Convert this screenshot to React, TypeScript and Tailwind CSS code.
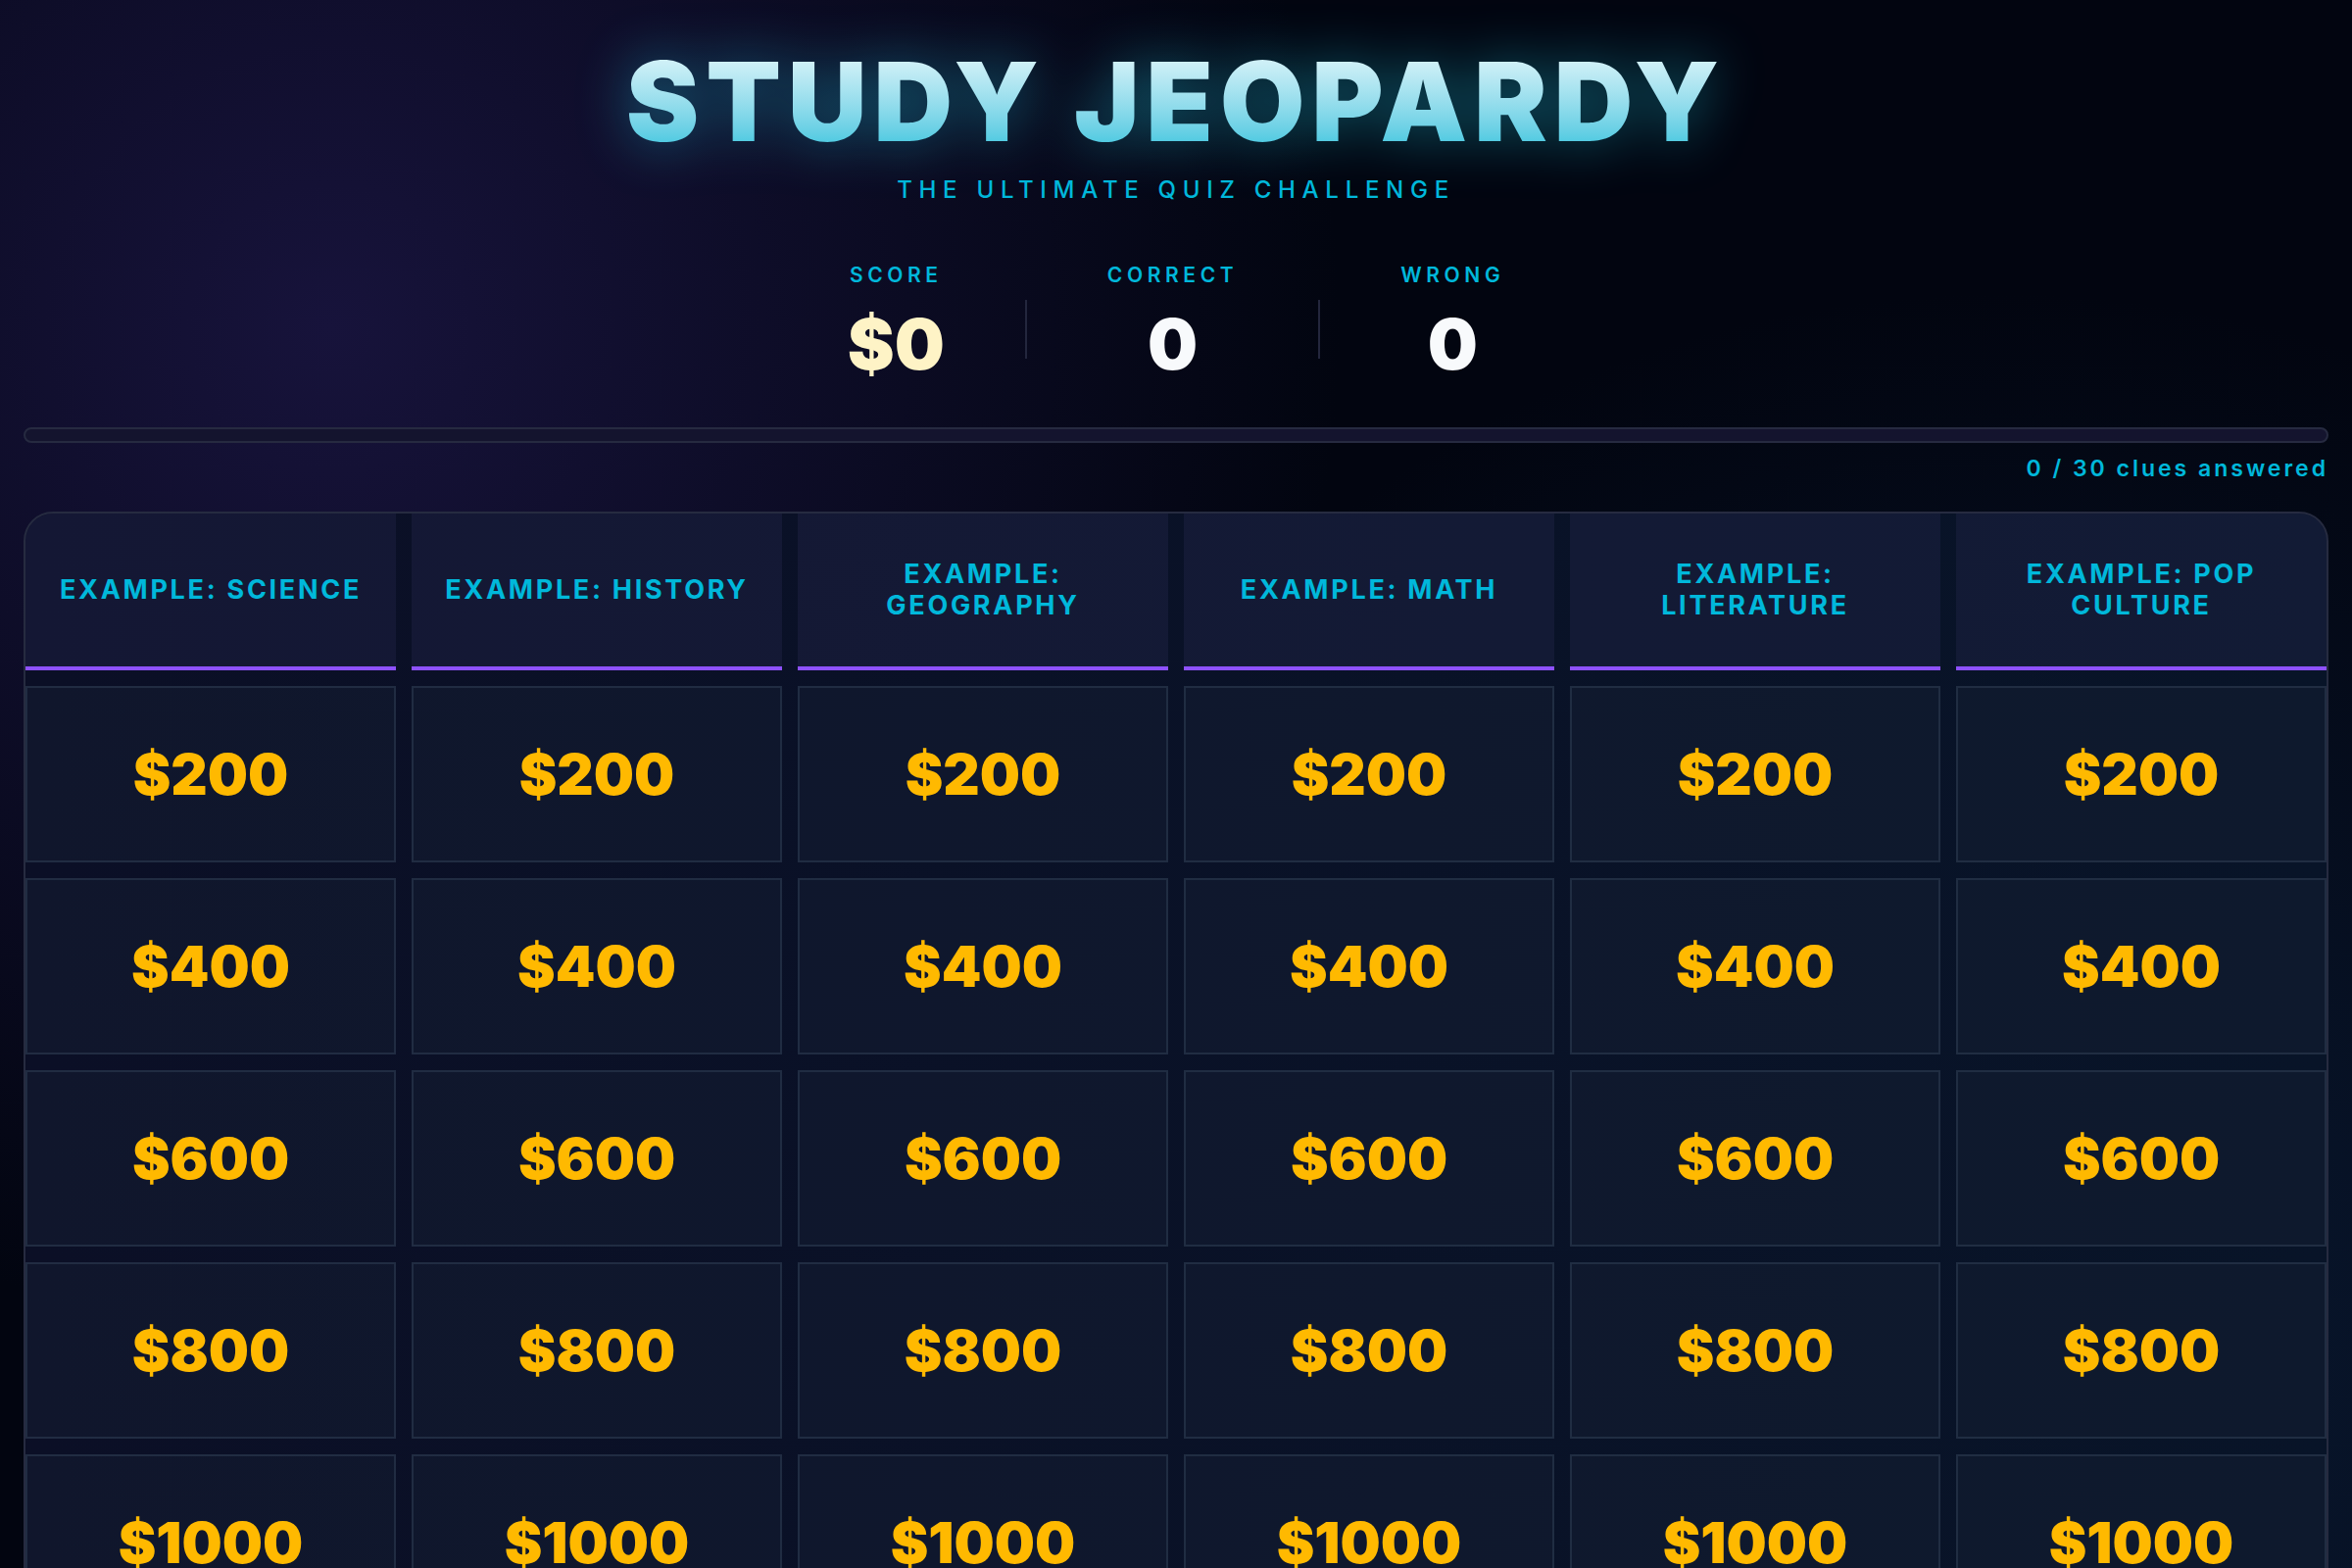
import React from 'react';

const categories = [
  'Example: Science',
  'Example: History',
  'Example: Geography',
  'Example: Math',
  'Example: Literature',
  'Example: Pop Culture',
];

const values = [200, 400, 600, 800, 1000];

const Stat: React.FC<{ label: string; value: string; tone: string }> = ({ label, value, tone }) => (
  <div className="flex flex-col items-center">
    <span className="text-[21px] leading-[28px] font-semibold tracking-[0.22em] text-cyan-500 uppercase">
      {label}
    </span>
    <span className={`mt-[20px] text-[72px] leading-none font-black ${tone}`}>{value}</span>
  </div>
);

const Divider = () => <div className="mt-[18px] h-[60px] w-[2px] bg-[#23263d]" />;

const App: React.FC = () => {
  const answered = 0;
  const total = categories.length * values.length;

  return (
    <div className="min-h-screen overflow-hidden bg-[#020510] bg-[radial-gradient(circle_at_14%_20%,#17133b_0%,transparent_42%),radial-gradient(circle_at_85%_85%,#0a1a33_0%,transparent_45%)] px-6 pt-[47px] font-['Inter','Liberation_Sans',sans-serif]">
      <header className="text-center">
        <h1 className="bg-gradient-to-b from-[#e3f7fb] to-[#2cc4de] bg-clip-text text-[112px] leading-none font-black tracking-[0.06em] text-transparent drop-shadow-[0_0_28px_rgba(34,211,238,0.45)]">
          STUDY JEOPARDY
        </h1>
        <p className="mt-[19px] text-[24px] leading-[32px] font-medium tracking-[0.28em] text-cyan-500">
          THE ULTIMATE QUIZ CHALLENGE
        </p>
      </header>

      <div className="mt-[57px] flex items-center justify-center gap-[82px]">
        <Stat label="Score" value="$0" tone="text-amber-100" />
        <Divider />
        <Stat label="Correct" value="0" tone="text-slate-50" />
        <Divider />
        <Stat label="Wrong" value="0" tone="text-slate-50" />
      </div>

      <div className="mt-[49px] h-4 rounded-full border-2 border-[#262a40] bg-[#14142e]">
        <div className="h-full rounded-full bg-violet-500" style={{ width: `${(answered / total) * 100}%` }} />
      </div>
      <p className="mt-[11px] text-right text-[23px] leading-[30px] font-semibold tracking-[0.13em] text-cyan-500">
        {answered} / {total} clues answered
      </p>

      <div className="mt-[29px] grid grid-cols-6 gap-4 overflow-hidden rounded-[30px] border-2 border-[#262b40] bg-[linear-gradient(90deg,#0b0f26,#081428)]">
        {categories.map((c) => (
          <div
            key={c}
            className="flex h-[160px] items-center justify-center border-b-4 border-violet-500 bg-[rgba(45,45,90,0.28)] px-6 text-center text-[27px] leading-[32px] font-bold tracking-[0.1em] text-cyan-500 uppercase"
          >
            {c}
          </div>
        ))}
        {values.map((v) =>
          categories.map((c) => (
            <button
              key={`${c}-${v}`}
              className="flex h-[180px] items-center justify-center border-2 border-slate-700/50 bg-slate-800/30 text-[58px] font-black text-amber-400"
            >
              ${v}
            </button>
          ))
        )}
      </div>
    </div>
  );
};

export default App;
